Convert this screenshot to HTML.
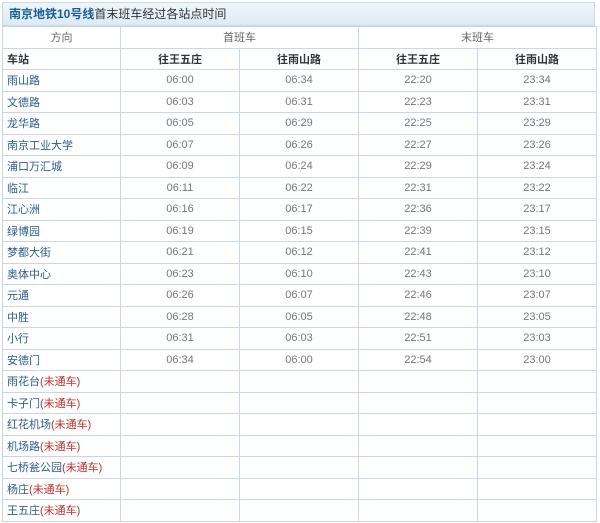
<!DOCTYPE html>
<html><head><meta charset="utf-8"><style>
body{margin:0;width:600px;height:523px;background:#fff;font-family:"Liberation Sans","Noto Sans CJK SC",sans-serif;overflow:hidden;position:relative}
.title{position:absolute;left:2px;top:2px;width:593px;height:24px;background:linear-gradient(#eef6fc,#dcebf7);border:1px solid #c9d9e6;box-sizing:border-box;font-size:12px;line-height:22px;padding-left:6px;color:#333}
.title b{color:#1b5c96}
table{position:absolute;left:2px;top:26px;border-collapse:collapse;width:594px;table-layout:fixed}
td{border:1px solid #c8d7e3;height:20.5px;padding:0;font-size:11px;text-align:center;color:#777}
td.s{text-align:left;padding-left:4px;color:#2b5d8a;font-size:11px}
tr.h td{color:#666}
tr.h2 td{font-weight:bold;color:#333}
.r{color:#c0302a}
</style></head><body>
<div class="title"><b>南京地铁10号线</b>首末班车经过各站点时间</div>
<table>
<colgroup><col style="width:118px"><col style="width:119px"><col style="width:119px"><col style="width:119px"><col style="width:119px"></colgroup>
<tr class="h"><td>方向</td><td colspan="2">首班车</td><td colspan="2">末班车</td></tr>
<tr class="h2"><td class="s" style="color:#333">车站</td><td>往王五庄</td><td>往雨山路</td><td>往王五庄</td><td>往雨山路</td></tr>
<tr><td class="s">雨山路</td><td>06:00</td><td>06:34</td><td>22:20</td><td>23:34</td></tr>
<tr><td class="s">文德路</td><td>06:03</td><td>06:31</td><td>22:23</td><td>23:31</td></tr>
<tr><td class="s">龙华路</td><td>06:05</td><td>06:29</td><td>22:25</td><td>23:29</td></tr>
<tr><td class="s">南京工业大学</td><td>06:07</td><td>06:26</td><td>22:27</td><td>23:26</td></tr>
<tr><td class="s">浦口万汇城</td><td>06:09</td><td>06:24</td><td>22:29</td><td>23:24</td></tr>
<tr><td class="s">临江</td><td>06:11</td><td>06:22</td><td>22:31</td><td>23:22</td></tr>
<tr><td class="s">江心洲</td><td>06:16</td><td>06:17</td><td>22:36</td><td>23:17</td></tr>
<tr><td class="s">绿博园</td><td>06:19</td><td>06:15</td><td>22:39</td><td>23:15</td></tr>
<tr><td class="s">梦都大街</td><td>06:21</td><td>06:12</td><td>22:41</td><td>23:12</td></tr>
<tr><td class="s">奥体中心</td><td>06:23</td><td>06:10</td><td>22:43</td><td>23:10</td></tr>
<tr><td class="s">元通</td><td>06:26</td><td>06:07</td><td>22:46</td><td>23:07</td></tr>
<tr><td class="s">中胜</td><td>06:28</td><td>06:05</td><td>22:48</td><td>23:05</td></tr>
<tr><td class="s">小行</td><td>06:31</td><td>06:03</td><td>22:51</td><td>23:03</td></tr>
<tr><td class="s">安德门</td><td>06:34</td><td>06:00</td><td>22:54</td><td>23:00</td></tr>
<tr><td class="s">雨花台<span class="r">(未通车)</span></td><td></td><td></td><td></td><td></td></tr>
<tr><td class="s">卡子门<span class="r">(未通车)</span></td><td></td><td></td><td></td><td></td></tr>
<tr><td class="s">红花机场<span class="r">(未通车)</span></td><td></td><td></td><td></td><td></td></tr>
<tr><td class="s">机场路<span class="r">(未通车)</span></td><td></td><td></td><td></td><td></td></tr>
<tr><td class="s">七桥瓮公园<span class="r">(未通车)</span></td><td></td><td></td><td></td><td></td></tr>
<tr><td class="s">杨庄<span class="r">(未通车)</span></td><td></td><td></td><td></td><td></td></tr>
<tr><td class="s">王五庄<span class="r">(未通车)</span></td><td></td><td></td><td></td><td></td></tr>
</table>
</body></html>
